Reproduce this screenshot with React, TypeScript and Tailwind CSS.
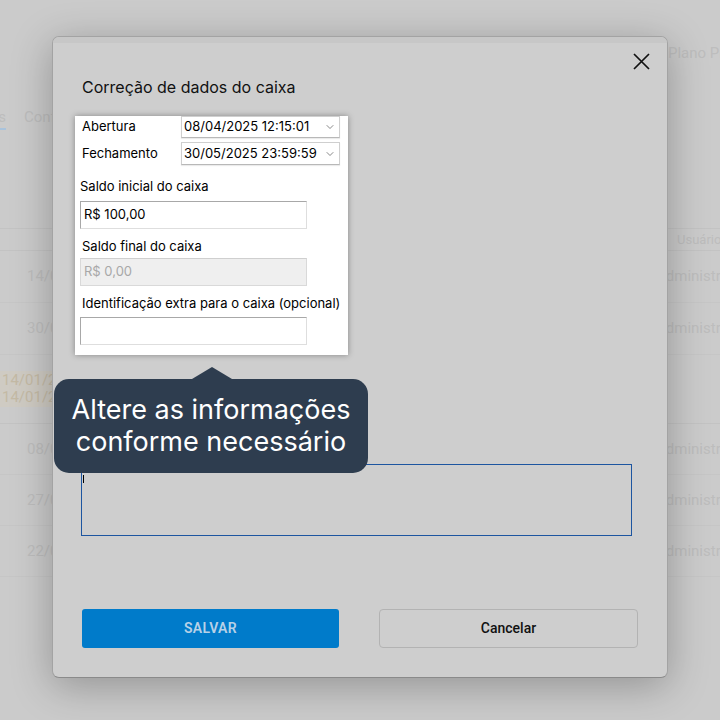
import { ChevronDown } from "lucide-react";

const rows = [
  { date: "14/04/2025", user: "Administrador" },
  { date: "30/05/2025", user: "Administrador" },
];

const lowerRows = [
  { date: "08/04/2025", user: "Administrador" },
  { date: "27/03/2025", user: "Administrador" },
  { date: "22/03/2025", user: "Administrador" },
];

function BackgroundPage() {
  return (
    <div className="flex flex-col text-[15px] text-[#bdbdbd] font-['Roboto',sans-serif]">
      <div className="ml-[668px] mt-[43px] h-[20px] whitespace-nowrap leading-[20px]">Plano Premium</div>
      <div className="mt-[44px] flex h-[22px] items-start gap-[18px] leading-[20px]">
        <span className="-ml-[50px] w-[56px] shrink-0 border-b-2 border-[#a9c3dc] pb-[1px] text-right">Caixas</span>
        <span className="whitespace-nowrap">Conferências</span>
      </div>
      <div className="mt-[99px] flex h-[23px] items-center border-y border-[#c3c3c3] text-[13px]">
        <span className="ml-[677px] whitespace-nowrap">Usuário</span>
      </div>
      {rows.map((r) => (
        <div key={r.date} className="flex h-[52px] items-center border-b border-[#c6c6c6]">
          <span className="ml-[27px] w-[629px] shrink-0">{r.date}</span>
          <span className="whitespace-nowrap">{r.user}</span>
        </div>
      ))}
      <div className="flex h-[69px] items-center border-b border-[#c3c3c3]">
        <div className="flex w-[652px] flex-col bg-[#cfcbc3] py-[1px] pl-[2px] leading-[17px] text-[#c4baa5]">
          <span>14/01/2025</span>
          <span>14/01/2025</span>
        </div>
      </div>
      {lowerRows.map((r) => (
        <div key={r.date} className="flex h-[51px] items-center border-b border-[#c6c6c6]">
          <span className="ml-[27px] w-[629px] shrink-0">{r.date}</span>
          <span className="whitespace-nowrap">{r.user}</span>
        </div>
      ))}
    </div>
  );
}

function DateSelect({ value }: { value: string }) {
  return (
    <div className="flex h-full w-[159px] items-center justify-between border border-[#cfcfcf] border-b-[#b8b8b8] bg-white pl-[2px] pr-[3px] shadow-[0_1px_1px_rgba(0,0,0,0.08)]">
      <span className="text-[13px] text-black">{value}</span>
      <ChevronDown size={12} strokeWidth={1.4} className="text-[#555]" />
    </div>
  );
}

function MoneyInput({ value, disabled }: { value?: string; disabled?: boolean }) {
  return (
    <div
      className={
        disabled
          ? "flex h-[28px] w-[227px] items-center border border-[#d9d9d9] border-t-[#cfcfcf] bg-[#efefef] px-[3px] text-[13px] text-[#a8a8a8]"
          : "flex h-[28px] w-[227px] items-center border border-[#dedede] border-l-[#a8a8a8] border-t-[#a8a8a8] bg-white px-[3px] text-[13px] text-black"
      }
    >
      {value}
    </div>
  );
}

export default function App() {
  return (
    <div className="relative h-[720px] w-full overflow-hidden bg-[#cbcbcb] font-['Inter',sans-serif]">
      <BackgroundPage />

      {/* modal */}
      <div className="absolute left-[52px] top-[36px] flex h-[642px] w-[616px] flex-col overflow-visible rounded-[7px] border border-[#a3a3a3] border-b-[#8a8a8a] bg-[#cecece] shadow-[0_8px_40px_rgba(0,0,0,0.28)]">
        <div className="h-[6px] rounded-t-[7px] bg-[#c7c7c7]" />
        <button className="absolute right-[17px] top-[16px]">
          <svg width="17" height="17" viewBox="0 0 17 17">
            <path d="M1 1L16 16M16 1L1 16" stroke="#111" strokeWidth="1.7" fill="none" />
          </svg>
        </button>

        <div className="flex flex-1 flex-col px-[29px]">
          <h2 className="mt-[34px] h-[20px] text-[16px] leading-[20px] text-[#111]">
            Correção de dados do caixa
          </h2>

          {/* highlighted fields */}
          <div className="relative z-10 -ml-[7px] mt-[19px] flex w-[273px] flex-col bg-white pb-[10px] pl-[5px] shadow-[0_0_6px_rgba(0,0,0,0.35)]">
            <div className="flex h-[22px] items-center">
              <span className="w-[101px] pl-[2px] text-[13px] text-black">Abertura</span>
              <DateSelect value="08/04/2025 12:15:01" />
            </div>
            <div className="mt-[4px] flex h-[23px] items-center">
              <span className="w-[101px] pl-[2px] text-[13px] text-black">Fechamento</span>
              <DateSelect value="30/05/2025 23:59:59" />
            </div>
            <div className="mt-[11px] h-[20px] text-[13px] leading-[20px] text-black">Saldo inicial do caixa</div>
            <div className="mt-[5px]">
              <MoneyInput value="R$ 100,00" />
            </div>
            <div className="mt-[7px] h-[20px] pl-[2px] text-[13px] leading-[20px] text-black">Saldo final do caixa</div>
            <div className="mt-[2px]">
              <MoneyInput value="R$ 0,00" disabled />
            </div>
            <div className="mt-[7px] h-[20px] whitespace-nowrap pl-[2px] text-[13px] leading-[20px] text-black">
              Identificação extra para o caixa (opcional)
            </div>
            <div className="mt-[4px]">
              <MoneyInput />
            </div>
          </div>

          <div className="-ml-[1px] mt-[109px] h-[72px] w-[551px] border border-[#1d55a0] pl-[1px] pt-[10px]">
            <span className="block h-[8px] w-[1px] bg-black" />
          </div>

          <div className="mt-[73px] flex gap-[40px]">
            <button className="h-[39px] flex-1 rounded-[3px] bg-[#007bca] text-[14px] font-semibold tracking-wide text-[#b7d1e7] font-['Roboto',sans-serif]">
              SALVAR
            </button>
            <button className="h-[39px] flex-1 rounded-[4px] border border-[#b3b3b3] text-[14px] font-medium text-[#111] font-['Roboto',sans-serif]">
              Cancelar
            </button>
          </div>
        </div>

        {/* tour tooltip */}
        <div className="absolute left-[1px] top-[342px] z-20 flex h-[94px] w-[314px] items-center justify-center rounded-[15px] bg-[#2e3d4f]">
          <span className="absolute -top-[12px] left-[138px] h-0 w-0 border-x-[20px] border-b-[12px] border-x-transparent border-b-[#2e3d4f]" />
          <p className="text-center text-[27px] leading-[32px] text-white">
            Altere as informações
            <br />
            conforme necessário
          </p>
        </div>
      </div>
    </div>
  );
}
